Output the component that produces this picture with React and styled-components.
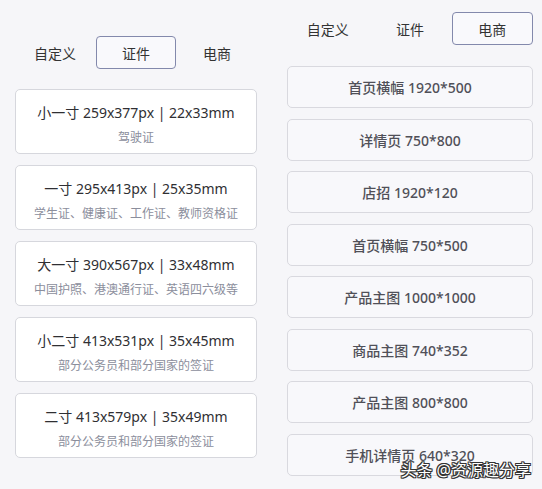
import React from 'react';
import styled, { createGlobalStyle } from 'styled-components';

const GlobalStyle = createGlobalStyle`
  html, body { margin: 0; padding: 0; background: #f6f6f9; }
  body { font-family: "Noto Sans", "Noto Sans CJK SC", sans-serif; }
`;

const idCards = [
  { title: '小一寸 259x377px | 22x33mm', sub: '驾驶证' },
  { title: '一寸 295x413px | 25x35mm', sub: '学生证、健康证、工作证、教师资格证' },
  { title: '大一寸 390x567px | 33x48mm', sub: '中国护照、港澳通行证、英语四六级等' },
  { title: '小二寸 413x531px | 35x45mm', sub: '部分公务员和部分国家的签证' },
  { title: '二寸 413x579px | 35x49mm', sub: '部分公务员和部分国家的签证' },
];

const shopSizes = [
  '首页横幅 1920*500',
  '详情页 750*800',
  '店招 1920*120',
  '首页横幅 750*500',
  '产品主图 1000*1000',
  '商品主图 740*352',
  '产品主图 800*800',
  '手机详情页 640*320',
];

const tabs = ['自定义', '证件', '电商'];

export default function App() {
  return (
    <Page>
      <GlobalStyle />
      <LeftPanel>
        <Tabs>
          {tabs.map((t) => (
            <Tab key={t} $active={t === '证件'}>{t}</Tab>
          ))}
        </Tabs>
        <IdList>
          {idCards.map((c) => (
            <IdCard key={c.title}>
              <IdTitle>{c.title}</IdTitle>
              <IdSub>{c.sub}</IdSub>
            </IdCard>
          ))}
        </IdList>
      </LeftPanel>
      <RightPanel>
        <Tabs>
          {tabs.map((t) => (
            <Tab key={t} $active={t === '电商'}>{t}</Tab>
          ))}
        </Tabs>
        <ShopList>
          {shopSizes.map((s) => (
            <ShopCard key={s}>{s}</ShopCard>
          ))}
        </ShopList>
      </RightPanel>
      <Watermark>头条 @资源趣分享</Watermark>
    </Page>
  );
}

const Page = styled.div`
  position: relative;
  display: flex;
  width: 542px;
  height: 489px;
  overflow: hidden;
  background: #f6f6f9;
`;

const LeftPanel = styled.div`
  width: 242px;
  padding: 36px 13px 0 15px;
  display: flex;
  flex-direction: column;
  gap: 20px;
`;

const RightPanel = styled.div`
  width: 246px;
  padding: 12px 9px 0 17px;
  display: flex;
  flex-direction: column;
  gap: 21px;
`;

const Tabs = styled.div`
  display: flex;
  gap: 1px;
`;

const Tab = styled.div`
  flex: 1;
  height: 33px;
  box-sizing: border-box;
  display: flex;
  align-items: center;
  justify-content: center;
  font-size: 14px;
  color: #333;
  border-radius: 4px;
  border: 1px solid ${(p) => (p.$active ? '#8389ac' : 'transparent')};
  background: ${(p) => (p.$active ? '#f9f9fc' : 'transparent')};
`;

const IdList = styled.div`
  display: flex;
  flex-direction: column;
  gap: 11px;
`;

const IdCard = styled.div`
  height: 65px;
  box-sizing: border-box;
  padding-top: 13px;
  background: #fff;
  border: 1px solid #d6d7dd;
  border-radius: 5px;
  display: flex;
  flex-direction: column;
  align-items: center;
  gap: 6px;
`;

const IdTitle = styled.div`
  font-size: 14px;
  line-height: 20px;
  color: #2f2f33;
`;

const IdSub = styled.div`
  font-size: 12px;
  line-height: 18px;
  color: #8b8e9c;
`;

const ShopList = styled.div`
  display: flex;
  flex-direction: column;
  gap: 10.5px;
`;

const ShopCard = styled.div`
  height: 42px;
  box-sizing: border-box;
  border: 1px solid #d9d9df;
  border-radius: 5px;
  background: #f8f8fb;
  display: flex;
  align-items: center;
  justify-content: center;
  font-size: 14px;
  font-weight: 500;
  color: #505058;
`;

const Watermark = styled.div`
  position: absolute;
  right: 11px;
  bottom: 9px;
  font-size: 16px;
  line-height: 20px;
  color: #fff;
  text-shadow:
    1px 0 0 #333, -1px 0 0 #333, 0 1px 0 #333, 0 -1px 0 #333,
    1px 1px 0 #333, -1px -1px 0 #333, 1px -1px 0 #333, -1px 1px 0 #333;
`;
